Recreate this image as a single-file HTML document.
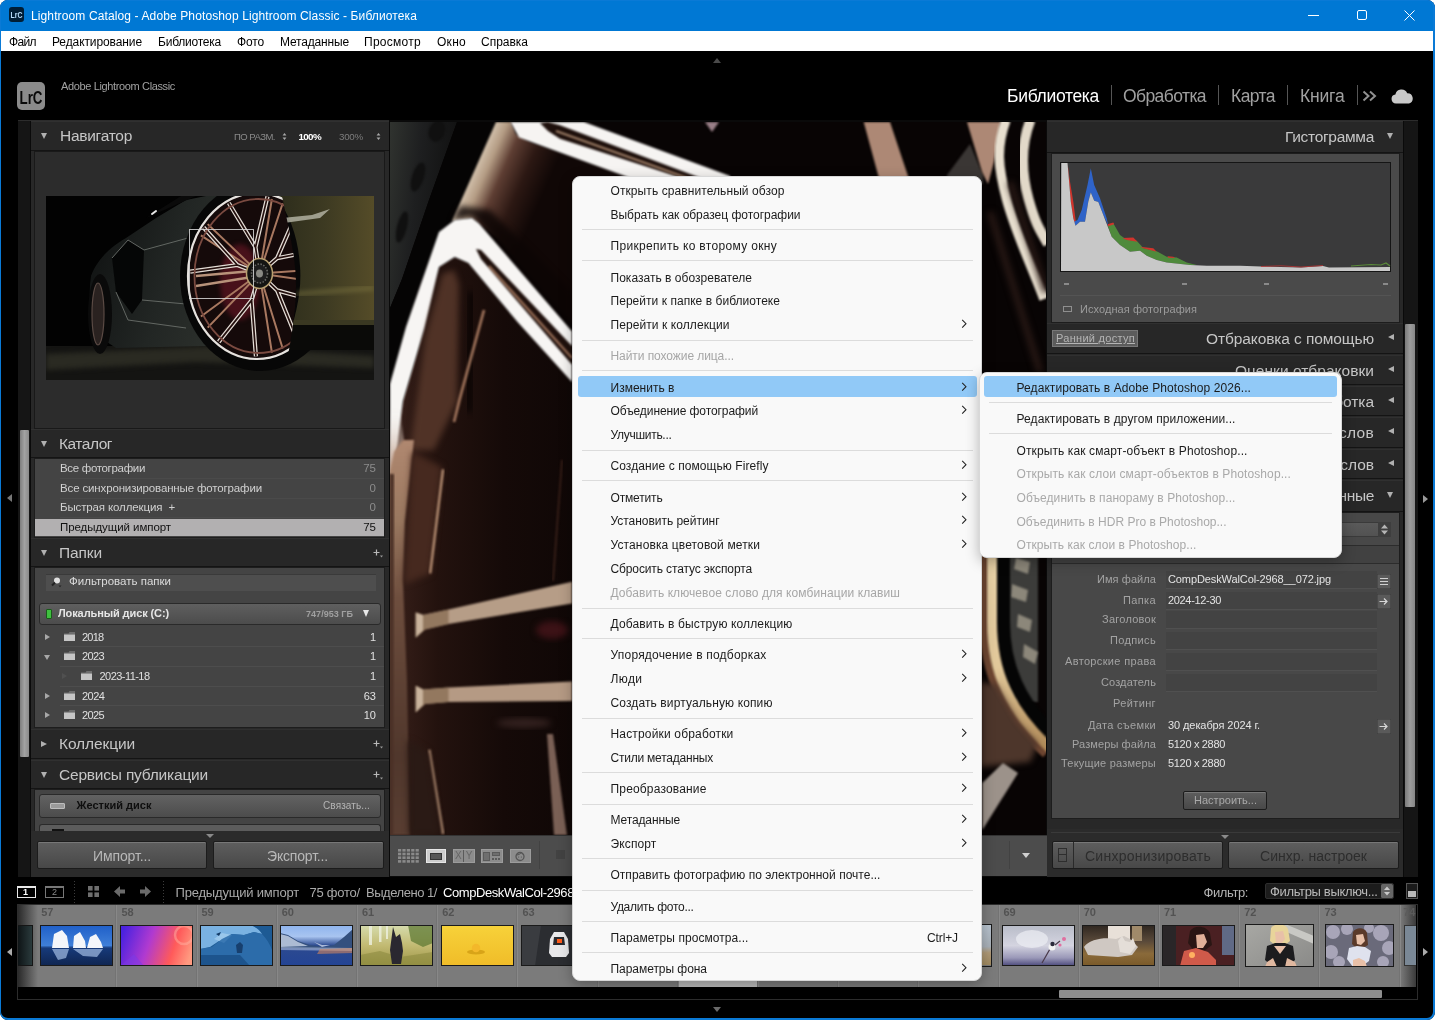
<!DOCTYPE html>
<html lang="ru"><head><meta charset="utf-8"><title>Lightroom Catalog - Adobe Photoshop Lightroom Classic - Библиотека</title>
<style>
html,body{margin:0;padding:0}
body{width:1435px;height:1020px;overflow:hidden;background:#fff;font-family:"Liberation Sans",sans-serif;position:relative}
*{box-sizing:border-box}
.a{position:absolute}
.t{position:absolute;white-space:nowrap;line-height:1;transform-origin:0 50%}
.r{transform-origin:100% 50%}
#win{position:absolute;left:0;top:0;width:1435px;height:1020px;background:#000;border-radius:8px;overflow:hidden;will-change:transform}
#frame{position:absolute;left:0;top:0;width:1435px;height:1020px;border:1px solid #0a7ad6;border-bottom-width:2px;border-right-width:2px;border-radius:8px;z-index:50;pointer-events:none}
#title{left:0;top:0;width:1435px;height:31px;background:#0078d4}
#mbar{left:1px;top:31px;width:1433px;height:20px;background:#fff}
.mi{font-size:12px;color:#000;top:36px}
.ph{font-size:15.5px;color:#c6c6c6}
.tri{width:0;height:0;border-style:solid}

.hd{position:absolute;background:#272727;border-bottom:1px solid #141414;border-top:1px solid #303030}
.row{font-size:11.5px;color:#d0d0d0}
.cnt{font-size:11.5px;color:#8c8c8c}
.sepl{position:absolute;height:1px;background:#4a4a4a;left:60px;width:324px}
.btn{position:absolute;border:1px solid #1c1c1c;border-radius:2px;background:linear-gradient(#5e5e5e,#484848);box-shadow:inset 0 1px 0 #777}

.menu{position:absolute;background:#f9f9f9;border:1px solid #d8d8d8;border-radius:8px;box-shadow:0 4px 14px rgba(0,0,0,.28)}
.m{position:absolute;white-space:nowrap;line-height:1;font-size:12px;color:#1b1b1b;left:610.500px;margin-top:1px}
.m.d{color:#a6a6a6}
.ms{position:absolute;left:582px;width:391px;height:1px;background:#dcdcdc}
.s{position:absolute;white-space:nowrap;line-height:1;font-size:12px;color:#1b1b1b;left:1016.500px;margin-top:1px}
.s.d{color:#a9a9a9}
.ss{position:absolute;left:989px;width:343px;height:1px;background:#dcdcdc}
/*SECTION-CSS*/
</style></head><body>
<div id="win">
<!-- title bar -->
<div class="a" id="title"></div>
<svg class="a" style="left:9px;top:7px" width="15" height="15" viewBox="0 0 15 15"><rect width="15" height="15" rx="3" fill="#001e36"></rect><text x="1.500" y="11" font-family="Liberation Sans,sans-serif" font-size="9" font-weight="bold" fill="#b5dcfa" textLength="12" lengthAdjust="spacingAndGlyphs">LrC</text></svg>
<div class="t" id="ttl" style="left: 31px; top: 10px; font-size: 12px; color: rgb(255, 255, 255); letter-spacing: 0.12px;">Lightroom Catalog - Adobe Photoshop Lightroom Classic - Библиотека</div>
<svg class="a" style="left:1300px;top:8px" width="125" height="16" viewBox="0 0 125 16" fill="none" stroke="#fff" stroke-width="1"><path d="M8 7.5h11"></path><rect x="57.5" y="2.5" width="9" height="9" rx="1.5"></rect><path d="M104.500 2.500l10 10M114.500 2.500l-10 10"></path></svg>
<!-- menu bar -->
<div class="a" id="mbar"></div>
<div class="t mi" style="left: 9px; letter-spacing: -0.629px;">Файл</div>
<div class="t mi" style="left: 52px; letter-spacing: -0.102px;">Редактирование</div>
<div class="t mi" style="left: 158px; letter-spacing: -0.225px;">Библиотека</div>
<div class="t mi" style="left: 237px; letter-spacing: -0.145px;">Фото</div>
<div class="t mi" style="left: 280px; letter-spacing: -0.167px;">Метаданные</div>
<div class="t mi" style="left: 364px; letter-spacing: 0.273px;">Просмотр</div>
<div class="t mi" style="left: 437px; letter-spacing: 0.277px;">Окно</div>
<div class="t mi" style="left: 481px; letter-spacing: -0.011px;">Справка</div>

<!-- top identity bar -->
<div class="tri a" style="left:713px;top:58px;border-width:0 4px 5px 4px;border-color:transparent transparent #4a4a4a transparent"></div>
<div class="tri a" style="left:713px;top:1007px;border-width:5px 4px 0 4px;border-color:#6a6a6a transparent transparent transparent"></div>
<div class="tri a" style="left:7px;top:494px;border-width:4px 5px 4px 0;border-color:transparent #777 transparent transparent"></div>
<div class="tri a" style="left:1423px;top:495px;border-width:4px 0 4px 5px;border-color:transparent transparent transparent #999"></div>
<div class="tri a" style="left:7px;top:948px;border-width:4px 5px 4px 0;border-color:transparent #aaa transparent transparent"></div>
<div class="tri a" style="left:1423px;top:948px;border-width:4px 0 4px 5px;border-color:transparent transparent transparent #aaa"></div>
<svg class="a" style="left:17px;top:82px" width="28" height="28" viewBox="0 0 28 28"><rect width="28" height="28" rx="5" fill="#8b8b8b"></rect><text x="2.500" y="21.500" font-family="Liberation Sans,sans-serif" font-size="19" font-weight="bold" fill="#0a0a0a" textLength="23" lengthAdjust="spacingAndGlyphs">LrC</text></svg>
<div class="t" style="left: 61px; top: 81px; font-size: 11px; color: rgb(162, 162, 162); letter-spacing: -0.361px;">Adobe Lightroom Classic</div>
<div class="t" style="left: 1007px; top: 88px; font-size: 17.5px; color: rgb(255, 255, 255); letter-spacing: -0.316px;">Библиотека</div>
<div class="t" style="left: 1123px; top: 88px; font-size: 17.5px; color: rgb(160, 160, 160); letter-spacing: -0.585px;">Обработка</div>
<div class="t" style="left: 1231px; top: 88px; font-size: 17.5px; color: rgb(160, 160, 160); letter-spacing: -0.566px;">Карта</div>
<div class="t" style="left: 1300px; top: 88px; font-size: 17.5px; color: rgb(160, 160, 160); letter-spacing: -0.175px;">Книга</div>
<div class="a" style="left:1111px;top:85px;width:1px;height:20px;background:#555"></div>
<div class="a" style="left:1218px;top:85px;width:1px;height:20px;background:#555"></div>
<div class="a" style="left:1287px;top:85px;width:1px;height:20px;background:#555"></div>
<div class="a" style="left:1357px;top:85px;width:1px;height:20px;background:#555"></div>
<svg class="a" style="left:1362px;top:90px" width="16" height="12" viewBox="0 0 16 12" fill="none" stroke="#909090" stroke-width="2"><path d="M1.500 1.500l5 4.500l-5 4.500M8 1.500l5 4.500l-5 4.500"></path></svg>
<svg class="a" style="left:1391px;top:89px" width="23" height="15" viewBox="0 0 23 15"><path d="M5 14.500a4.500 4.500 0 0 1-.6-8.950a6.200 6.200 0 0 1 11.800-1.400a5.300 5.300 0 0 1 1.800 10.350z" fill="#c9c9c9"></path></svg>

<!-- left panel -->
<div class="a" style="left:18px;top:120px;width:371px;height:757px;background:#151515;border-top:1px solid #2c2c2c"></div>
<div class="a" style="left:30px;top:121px;width:1px;height:756px;background:#0a0a0a"></div><div class="a" style="left:31px;top:121px;width:358px;height:710px;background:#282828"></div>
<div class="a" style="left:20px;top:430px;width:9px;height:327px;background:linear-gradient(90deg,#7e7e7e,#a2a2a2 50%,#8a8a8a);border-radius:1px"></div>
<div class="hd" style="left:31px;top:121px;width:358px;height:30px"></div>
<div class="tri a" style="left:41px;top:133px;border-width:6px 3.500px 0 3.500px;border-color:#b0b0b0 transparent transparent transparent"></div>
<div class="t ph" style="left: 60px; top: 128px; letter-spacing: -0.274px;">Навигатор</div>
<div class="t" style="left: 234px; top: 132px; font-size: 9.5px; color: rgb(138, 138, 138); letter-spacing: -0.512px;">ПО РАЗМ.</div>
<div class="t" style="left: 298.5px; top: 132px; font-size: 9.8px; color: rgb(255, 255, 255); font-weight: bold; letter-spacing: -0.641px;">100%</div>
<div class="t" style="left: 339px; top: 132px; font-size: 9.8px; color: rgb(124, 124, 124); letter-spacing: -0.266px;">300%</div>
<svg class="a" style="left:282px;top:132px" width="5" height="9" viewBox="0 0 5 9"><path d="M2.500 1l1.900 2.500h-3.800zM2.500 8l1.900-2.500h-3.800z" fill="#a8a8a8"></path></svg>
<svg class="a" style="left:376px;top:132px" width="5" height="9" viewBox="0 0 5 9"><path d="M2.500 1l1.900 2.500h-3.800zM2.500 8l1.900-2.500h-3.800z" fill="#a8a8a8"></path></svg>
<div class="a" style="left:34px;top:151px;width:351px;height:278px;background:#2c2c2c;border:1px solid #191919"></div>
<svg class="a" style="left:46px;top:196px" width="328" height="184" viewBox="0 0 328 184">
<defs>
<filter id="n1" color-interpolation-filters="sRGB" x="-10%" y="-10%" width="120%" height="120%"><feGaussianBlur stdDeviation="0.7"></feGaussianBlur></filter>
<filter id="n3" color-interpolation-filters="sRGB" x="-20%" y="-20%" width="140%" height="140%"><feGaussianBlur stdDeviation="2.500"></feGaussianBlur></filter>
<linearGradient id="ngreen" x1="0" y1="0" x2="1" y2="0"><stop offset="0" stop-color="#2c2c1b"></stop><stop offset="0.5" stop-color="#3d3a22"></stop><stop offset="1" stop-color="#554c28"></stop></linearGradient>
<linearGradient id="nbody" x1="0" y1="0" x2="1" y2="0.300"><stop offset="0" stop-color="#0e1010"></stop><stop offset="0.6" stop-color="#222624"></stop><stop offset="1" stop-color="#2c302c"></stop></linearGradient>
<clipPath id="nclip"><rect width="328" height="184"></rect></clipPath>
<clipPath id="wclip"><path d="M120 -5H235C242 30 250 60 250 90C250 120 244 150 236 190H120z"></path></clipPath>
</defs>
<g clip-path="url(#nclip)">
<rect width="328" height="184" fill="#020202"></rect>
<!-- ground -->
<rect y="150" width="328" height="34" fill="#141412"></rect>
<polygon points="0,158 170,150 328,160 328,172 150,166 0,174" fill="#2a2a22" filter="url(#n3)"></polygon>
<!-- car body left -->
<path d="M45 80C50 66 62 52 80 42L110 22L140 4L160 0H200L160 150L70 152L52 140C44 120 42 100 45 80z" fill="url(#nbody)" filter="url(#n1)"></path>
<path d="M100 22L150 0H135z" fill="#0a0a0a"></path>
<path d="M66 62L82 44L98 54L96 104L86 118L70 96z" fill="#050606" filter="url(#n1)"></path>
<path d="M98 54L142 42M70 96L82 124L140 132M96 104L140 108" stroke="#6a6e6a" stroke-width="0.900" fill="none"></path>
<path d="M66 62L82 44L98 54" stroke="#7a7e7a" stroke-width="0.800" fill="none"></path>
<path d="M106 18l4-3" stroke="#e8e8e8" stroke-width="2" stroke-linecap="round"></path>
<!-- rear wheel small -->
<ellipse cx="54" cy="118" rx="12" ry="40" fill="#0a0a0a"></ellipse>
<ellipse cx="52" cy="118" rx="6" ry="31" fill="#2a2220" stroke="#5a4a44" stroke-width="1.200"></ellipse>
<!-- main tire -->
<ellipse cx="214" cy="80" rx="80" ry="95" fill="#070707"></ellipse>
<!-- green body right -->
<path d="M230 0H328V150H240C250 120 256 95 254 70C252 40 244 20 230 0z" fill="url(#ngreen)" filter="url(#n1)"></path>
<path d="M236 22l30-3l18-6l-10 9l-36 5z" fill="#b8b8a8" opacity="0.800" filter="url(#n1)"></path>
<path d="M250 98L328 92" stroke="#8a8248" stroke-width="3" filter="url(#n3)" opacity="0.700"></path>
<rect x="238" y="128" width="90" height="26" fill="#0a0a08" filter="url(#n1)"></rect>
<rect x="246" y="124" width="82" height="5" fill="#3a3822" filter="url(#n1)"></rect>
<!-- wheel -->
<g clip-path="url(#wclip)">
<ellipse cx="211" cy="80" rx="69" ry="83" fill="#150a0a"></ellipse>
<ellipse cx="194" cy="86" rx="20" ry="38" fill="#5a1420" filter="url(#n3)" opacity="0.750"></ellipse>
<path d="M213.5 77.5L154.9 39.3M213.5 77.5L161.7 28.1M213.5 77.5L225.9 3.0M213.5 77.5L236.7 7.3M213.5 77.5L276.4 73.0M213.5 77.5L276.4 86.7M213.5 77.5L236.7 152.5M213.5 77.5L225.9 156.7M213.5 77.5L161.7 131.6M213.5 77.5L154.9 120.5" stroke="#a87860" stroke-width="2" fill="none" filter="url(#n1)"></path>
<path d="M213.5 77.5L191.3 69.0L144.2 75.7M213.5 77.5L191.3 69.0L157.6 31.5M213.5 77.5L209.5 51.2L182.8 7.0M213.5 77.5L209.5 51.2L221.5 0.4M213.5 77.5L231.1 62.2L251.4 15.6M213.5 77.5L231.1 62.2L274.4 53.7M213.5 77.5L231.1 94.4L274.4 106.1M213.5 77.5L231.1 94.4L251.4 144.2M213.5 77.5L205.6 104.4L209.9 160.4M213.5 77.5L205.6 104.4L172.7 145.9" stroke="#e4ddd6" stroke-width="4.200" fill="none" stroke-linejoin="round" filter="url(#n1)"></path>
<path d="M213.5 77.5L191.3 69.0L144.2 75.7M213.5 77.5L191.3 69.0L157.6 31.5M213.5 77.5L209.5 51.2L182.8 7.0M213.5 77.5L209.5 51.2L221.5 0.4M213.5 77.5L231.1 62.2L251.4 15.6M213.5 77.5L231.1 62.2L274.4 53.7M213.5 77.5L231.1 94.4L274.4 106.1M213.5 77.5L231.1 94.4L251.4 144.2M213.5 77.5L205.6 104.4L209.9 160.4M213.5 77.5L205.6 104.4L172.7 145.9" stroke="#24100e" stroke-width="1.700" fill="none" stroke-linejoin="round"></path>
<path d="M206 75L150 80M206 81L150 90" stroke="#b8927a" stroke-width="2.400" fill="none" filter="url(#n1)"></path>
<ellipse cx="211" cy="80" rx="69" ry="83" fill="none" stroke="#e6e2de" stroke-width="2.200"></ellipse>
<ellipse cx="212.5" cy="80" rx="64" ry="77" fill="none" stroke="#7a4a40" stroke-width="1.800"></ellipse>
<ellipse cx="213.5" cy="77.5" rx="13" ry="15" fill="#141412" stroke="#b8a070" stroke-width="1.500"></ellipse>
<ellipse cx="213.5" cy="77.5" rx="8" ry="9.500" fill="#1e1e1e" stroke="#6a6a66" stroke-width="1.500" stroke-dasharray="1.500 1.500"></ellipse>
<ellipse cx="213.5" cy="77.5" rx="3.500" ry="4" fill="#8a8a84"></ellipse>
</g>
<!-- zoom rect -->
<rect x="143.500" y="33.500" width="64" height="69" fill="none" stroke="#d8d8d8" stroke-width="1" opacity="0.850"></rect>
</g></svg>
<div class="hd" style="left:31px;top:429px;width:358px;height:29px"></div>
<div class="tri a" style="left:41px;top:441px;border-width:6px 3.500px 0 3.500px;border-color:#b0b0b0 transparent transparent transparent"></div>
<div class="t ph" style="left: 59px; top: 436px; letter-spacing: -0.48px;">Каталог</div>
<div class="a" style="left:34px;top:458px;width:351px;height:80px;background:#444;border:1px solid #1d1d1d"></div>
<div class="t row" style="left: 60px; top: 463px; letter-spacing: -0.318px;">Все фотографии</div>
<div class="t cnt r" style="right:1059px;top:463.0px">75</div>
<div class="sepl" style="top:478px"></div>
<div class="t row" style="left: 60px; top: 482.7px; letter-spacing: -0.143px;">Все синхронизированные фотографии</div>
<div class="t cnt r" style="right:1059px;top:482.7px">0</div>
<div class="sepl" style="top:498px"></div>
<div class="t row" style="left: 60px; top: 502.4px; letter-spacing: -0.127px;">Быстрая коллекция&nbsp; +</div>
<div class="t cnt r" style="right:1059px;top:502.4px">0</div>
<div class="sepl" style="top:517px"></div>
<div class="a" style="left:35px;top:519px;width:349px;height:17px;background:#b2b0b1"></div>
<div class="t row" style="left: 60px; top: 522px; color: rgb(17, 17, 17); letter-spacing: -0.065px;">Предыдущий импорт</div>
<div class="t cnt r" style="right:1059px;top:522px;color:#111">75</div>
<div class="hd" style="left:31px;top:538px;width:358px;height:29px"></div>
<div class="tri a" style="left:41px;top:550px;border-width:6px 3.500px 0 3.500px;border-color:#b0b0b0 transparent transparent transparent"></div>
<div class="t ph" style="left: 59px; top: 545px; letter-spacing: -0.119px;">Папки</div>
<svg class="a" style="left:373px;top:549px" width="11" height="9" viewBox="0 0 11 9"><path d="M0.500 3.500h6M3.500 0.500v6" stroke="#b8b8b8" stroke-width="1.200" fill="none"></path><path d="M7 6.500h3l-1.500 2z" fill="#999"></path></svg>
<div class="a" style="left:34px;top:567px;width:351px;height:161px;background:#444;border:1px solid #1d1d1d"></div>
<div class="a" style="left:46px;top:574px;width:330px;height:17px;background:#4e4e4e;border-top:1px solid #3a3a3a"></div>
<svg class="a" style="left:51px;top:576px" width="12" height="12" viewBox="0 0 12 12"><circle cx="6" cy="4.500" r="3" fill="#e0e0e0"></circle><path d="M1 9.500l3-3" stroke="#222" stroke-width="2"></path><path d="M7.500 9.500h3l-1.500 1.800z" fill="#222"></path></svg>
<div class="t row" style="left: 69px; top: 576px; color: rgb(220, 220, 220); letter-spacing: 0.005px;">Фильтровать папки</div>
<div class="a" style="left:39px;top:603px;width:342px;height:22px;border:1px solid #2a2a2a;border-radius:3px;background:linear-gradient(#5f5f5f,#4c4c4c)"></div>
<div class="a" style="left:46px;top:609px;width:6px;height:10px;background:#3fc03f;border:1px solid #1a5a1a;border-radius:1px"></div>
<div class="t row" style="left: 58px; top: 608px; color: rgb(230, 230, 230); font-weight: bold; font-size: 11px; letter-spacing: -0.107px;">Локальный диск (C:)</div>
<div class="t" style="left: 306px; top: 609.5px; font-size: 9px; color: rgb(160, 160, 160); font-weight: bold; letter-spacing: 0.039px;">747/953 ГБ</div>
<div class="tri a" style="left:363px;top:610px;border-width:7px 3.500px 0 3.500px;border-color:#e8e8e8 transparent transparent transparent"></div>
<div class="tri a" style="left:45px;top:633.5px;border-width:3px 0 3px 5px;border-color:transparent transparent transparent #a8a8a8"></div>
<svg class="a" style="left:63.5px;top:631.5px" width="11" height="9" viewBox="0 0 11 9"><path d="M0 1.500h4.500l1-1.500h5.500v9h-11z" fill="#6e6e6e"></path><rect y="2.600" width="11" height="6.400" fill="#c6c6c6"></rect></svg>
<div class="t row" style="left: 82px; top: 631.5px; font-size: 11px; color: rgb(224, 224, 224); letter-spacing: -0.746px;">2018</div>
<div class="t row r" style="right:1059px;top:631.5px;font-size:11px;color:#e0e0e0">1</div>
<div class="sepl" style="top:646px;background:#4d4d4d"></div>
<div class="tri a" style="left:44px;top:654.6px;border-width:5px 3px 0 3px;border-color:#a8a8a8 transparent transparent transparent"></div>
<svg class="a" style="left:63.5px;top:651.1px" width="11" height="9" viewBox="0 0 11 9"><path d="M0 1.500h4.500l1-1.500h5.500v9h-11z" fill="#6e6e6e"></path><rect y="2.600" width="11" height="6.400" fill="#c6c6c6"></rect></svg>
<div class="t row" style="left: 82px; top: 651.1px; font-size: 11px; color: rgb(224, 224, 224); letter-spacing: -0.621px;">2023</div>
<div class="t row r" style="right:1059px;top:651.1px;font-size:11px;color:#e0e0e0">1</div>
<div class="sepl" style="top:666px;background:#4d4d4d"></div>
<div class="tri a" style="left:62px;top:672.8px;border-width:3px 0 3px 5px;border-color:transparent transparent transparent #505050"></div>
<svg class="a" style="left:81.0px;top:670.8px" width="11" height="9" viewBox="0 0 11 9"><path d="M0 1.500h4.500l1-1.500h5.500v9h-11z" fill="#6e6e6e"></path><rect y="2.600" width="11" height="6.400" fill="#c6c6c6"></rect></svg>
<div class="t row" style="left: 99.5px; top: 670.8px; font-size: 11px; color: rgb(224, 224, 224); letter-spacing: -0.545px;">2023-11-18</div>
<div class="t row r" style="right:1059px;top:670.8px;font-size:11px;color:#e0e0e0">1</div>
<div class="sepl" style="top:686px;background:#4d4d4d"></div>
<div class="tri a" style="left:45px;top:692.5px;border-width:3px 0 3px 5px;border-color:transparent transparent transparent #a8a8a8"></div>
<svg class="a" style="left:63.5px;top:690.5px" width="11" height="9" viewBox="0 0 11 9"><path d="M0 1.500h4.500l1-1.500h5.500v9h-11z" fill="#6e6e6e"></path><rect y="2.600" width="11" height="6.400" fill="#c6c6c6"></rect></svg>
<div class="t row" style="left: 82px; top: 690.5px; font-size: 11px; color: rgb(224, 224, 224); letter-spacing: -0.496px;">2024</div>
<div class="t row r" style="right:1059px;top:690.5px;font-size:11px;color:#e0e0e0">63</div>
<div class="sepl" style="top:705px;background:#4d4d4d"></div>
<div class="tri a" style="left:45px;top:712.1px;border-width:3px 0 3px 5px;border-color:transparent transparent transparent #a8a8a8"></div>
<svg class="a" style="left:63.5px;top:710.1px" width="11" height="9" viewBox="0 0 11 9"><path d="M0 1.500h4.500l1-1.500h5.500v9h-11z" fill="#6e6e6e"></path><rect y="2.600" width="11" height="6.400" fill="#c6c6c6"></rect></svg>
<div class="t row" style="left: 82px; top: 710.1px; font-size: 11px; color: rgb(224, 224, 224); letter-spacing: -0.621px;">2025</div>
<div class="t row r" style="right:1059px;top:710.1px;font-size:11px;color:#e0e0e0">10</div>
<div class="hd" style="left:31px;top:729px;width:358px;height:30px"></div>
<div class="tri a" style="left:41px;top:740.5px;border-width:3.5px 0 3.5px 6px;border-color:transparent transparent transparent #b0b0b0"></div>
<div class="t ph" style="left: 59px; top: 736px; letter-spacing: -0.111px;">Коллекции</div>
<svg class="a" style="left:373px;top:740px" width="11" height="9" viewBox="0 0 11 9"><path d="M0.500 3.500h6M3.500 0.500v6" stroke="#b8b8b8" stroke-width="1.200" fill="none"></path><path d="M7 6.500h3l-1.500 2z" fill="#999"></path></svg>
<div class="hd" style="left:31px;top:760px;width:358px;height:29px"></div>
<div class="tri a" style="left:41px;top:772px;border-width:6px 3.500px 0 3.500px;border-color:#b0b0b0 transparent transparent transparent"></div>
<div class="t ph" style="left: 59px; top: 767px; letter-spacing: -0.204px;">Сервисы публикации</div>
<svg class="a" style="left:373px;top:771px" width="11" height="9" viewBox="0 0 11 9"><path d="M0.500 3.500h6M3.500 0.500v6" stroke="#b8b8b8" stroke-width="1.200" fill="none"></path><path d="M7 6.500h3l-1.500 2z" fill="#999"></path></svg>
<div class="a" style="left:34px;top:789px;width:351px;height:42px;background:#444;border:1px solid #1d1d1d;border-bottom:none"></div>
<div class="a" style="left:39px;top:794px;width:342px;height:24px;border:1px solid #2a2a2a;border-radius:3px;background:linear-gradient(#626262,#4c4c4c)"></div>
<div class="a" style="left:39px;top:824px;width:342px;height:7px;border:1px solid #2a2a2a;border-bottom:none;border-radius:3px 3px 0 0;background:#5c5c5c"></div>
<div class="a" style="left:52px;top:829px;width:12px;height:2px;background:#111"></div>
<div class="a" style="left:50px;top:803px;width:15px;height:6px;background:#9a9a9a;border:1px solid #bdbdbd;border-radius:1px"></div>
<div class="t row" style="left: 76.5px; top: 800px; color: rgb(14, 14, 14); font-weight: bold; font-size: 11px; letter-spacing: 0.01px;">Жесткий диск</div>
<div class="t row" style="left: 323px; top: 801px; color: rgb(180, 180, 180); font-size: 10px; letter-spacing: 0.111px;">Связать...</div>
<div class="a" style="left:31px;top:831px;width:358px;height:46px;background:#2b2b2b"></div>
<div class="tri a" style="left:206px;top:834px;border-width:4px 4px 0 4px;border-color:#8a8a8a transparent transparent transparent"></div>
<div class="btn" style="left:37px;top:841px;width:170px;height:28px"></div>
<div class="btn" style="left:213px;top:841px;width:171px;height:28px"></div>
<div class="t" style="left: 93px; top: 849px; font-size: 14px; color: rgb(184, 184, 184); letter-spacing: -0.118px;">Импорт...</div>
<div class="t" style="left: 267px; top: 849px; font-size: 14px; color: rgb(184, 184, 184); letter-spacing: -0.173px;">Экспорт...</div>
<!-- center photo -->
<div class="a" style="left:389px;top:120px;width:658px;height:757px;background:#0a0a0a"></div>
<svg class="a" style="left:390px;top:122px" width="656" height="713" viewBox="0 0 656 713">
<defs>
<filter id="b1" color-interpolation-filters="sRGB" x="-10%" y="-10%" width="120%" height="120%"><feGaussianBlur stdDeviation="0.9"></feGaussianBlur></filter>
<filter id="b3" color-interpolation-filters="sRGB" x="-20%" y="-20%" width="140%" height="140%"><feGaussianBlur stdDeviation="3"></feGaussianBlur></filter>
<filter id="b8" color-interpolation-filters="sRGB" x="-30%" y="-30%" width="160%" height="160%"><feGaussianBlur stdDeviation="8"></feGaussianBlur></filter>
<linearGradient id="gface" gradientUnits="userSpaceOnUse" x1="80" y1="48" x2="150" y2="79"><stop offset="0" stop-color="#dccdb9"></stop><stop offset="0.2" stop-color="#b49c84"></stop><stop offset="0.4" stop-color="#5e3e33"></stop><stop offset="0.68" stop-color="#2c1813"></stop><stop offset="1" stop-color="#100706"></stop></linearGradient>
<linearGradient id="grec" gradientUnits="userSpaceOnUse" x1="0" y1="0" x2="190" y2="0"><stop offset="0" stop-color="#38201a"></stop><stop offset="0.25" stop-color="#23120e"></stop><stop offset="0.6" stop-color="#150a08"></stop><stop offset="1" stop-color="#0f0706"></stop></linearGradient>
<linearGradient id="grim" gradientUnits="userSpaceOnUse" x1="0" y1="318" x2="0" y2="713"><stop offset="0" stop-color="#b08870"></stop><stop offset="0.2" stop-color="#9a7860"></stop><stop offset="0.4" stop-color="#6e4e3e"></stop><stop offset="0.8" stop-color="#50372c"></stop><stop offset="1" stop-color="#593e32"></stop></linearGradient>
<linearGradient id="gtire" x1="0" y1="0" x2="1" y2="0.3"><stop offset="0" stop-color="#30332f"></stop><stop offset="0.45" stop-color="#1e1f20"></stop><stop offset="1" stop-color="#101010"></stop></linearGradient>
<linearGradient id="garc" x1="0" y1="0" x2="0" y2="1"><stop offset="0" stop-color="#e9d3a8"></stop><stop offset="0.6" stop-color="#e2c89a"></stop><stop offset="1" stop-color="#b08a58"></stop></linearGradient>
</defs>
<rect width="656" height="713" fill="#080404"></rect>
<!-- top-left tire -->
<polygon points="0,0 67,0 39,78 12,157 0,186" fill="url(#gtire)"></polygon>
<g fill="#101010" filter="url(#b1)"><ellipse cx="47" cy="9" rx="8" ry="11" transform="rotate(20 47 9)"></ellipse><ellipse cx="28" cy="55" rx="6" ry="15" transform="rotate(18 28 55)"></ellipse><ellipse cx="12" cy="105" rx="5" ry="16" transform="rotate(14 12 105)"></ellipse></g>
<polygon points="67,0 106,0 62,99 30,160 0,260 0,186 12,157 39,78" fill="#050404"></polygon>
<!-- brown lit face -->
<polygon points="106,0 121,0 126,12 140,20 340,88 340,200 182,200 110,118 82,96 62,99" fill="url(#gface)" filter="url(#b1)"></polygon>
<polygon points="82,94 62,99 70,84 100,88 182,170 182,207" fill="#0c0504" filter="url(#b3)" opacity="0.85"></polygon>
<!-- top white band -->
<polygon points="120.500,0 194,0 340,54 340,95 232,53 129,15.500" fill="#f6f4f2" filter="url(#b1)"></polygon>
<polygon points="150,1 158,0 170,3.300 304,53.500 340,67 320,67 284,53.500 170,16.700 158,9" fill="#1d0f0b" filter="url(#b1)"></polygon>
<path d="M166 9L300 57" stroke="#a08068" stroke-width="2.200" filter="url(#b1)"></path>
<polygon points="315,0 329,0 322,10" fill="#9a8088" filter="url(#b1)"></polygon>
<!-- recess inside V -->
<polygon points="32,200 49,145 64.700,135 78.400,141 127.500,200 182,259 190,713 0,713 0,350 13,279 34,208" fill="url(#grec)"></polygon>
<!-- white V -->
<g filter="url(#b1)">
<polygon points="0,262 16,205 49,110 64.700,98 82,96 89,101.500 182,209.400 182,260 127.500,200 78.400,141 64.700,135 49,145 34,208 13,279 6,333 2,352 0,352" fill="#f7f5f3"></polygon>
<polygon points="86,127 91,128 182,224 182,242.700 91,137" fill="#1f100c"></polygon>
<path d="M99 144L182 236" stroke="#9a7058" stroke-width="2.200"></path>
</g>
<linearGradient id="gtr" gradientUnits="userSpaceOnUse" x1="0" y1="285" x2="0" y2="350"><stop offset="0" stop-color="#f7f5f3" stop-opacity="0"></stop><stop offset="1" stop-color="#b08870"></stop></linearGradient><polygon points="0,280 9,280 14,318 5,352 0,352" fill="url(#gtr)" filter="url(#b1)"></polygon>
<!-- highlight streaks in recess -->
<polygon points="52,152 64,148 69,162 67,280 44,328 20,328 35,216" fill="#553629" filter="url(#b3)" opacity="0.9"></polygon>
<path d="M82 170L78 290" stroke="#0b0504" stroke-width="10" filter="url(#b3)" opacity="0.85"></path>
<path d="M94 188L69.400 278L64 300" stroke="#a87a60" stroke-width="2.600" fill="none" filter="url(#b1)"></path>
<!-- rim band lower-left -->
<polygon points="13,318 24,318 15,400 13,460 17,560 20,713 0,713 0,352 4,330" fill="url(#grim)" filter="url(#b1)"></polygon>
<polygon points="0,352 4,352 3,713 0,713" fill="#4a3026" filter="url(#b1)"></polygon>
<polygon points="22,330 52,345 40,452 14,462" fill="#46291f" filter="url(#b3)"></polygon>
<path d="M53 347.400L40.200 451.300" stroke="#c39a7c" stroke-width="2.200" filter="url(#b1)"></path>
<path d="M39.200 627.800L53 712" stroke="#b08c72" stroke-width="2.600" filter="url(#b1)"></path>
<polygon points="18,618 38,630 50,713 19,713" fill="#2a1a15" filter="url(#b3)"></polygon>
<path d="M172 338L163 459" stroke="#3e231b" stroke-width="1.600" filter="url(#b1)"></path>
<ellipse cx="134" cy="601" rx="27" ry="5" fill="#33211f" filter="url(#b3)"></ellipse>
<!-- spokes -->
<g filter="url(#b1)">
<polygon points="25.800,490.500 33,493 58.500,487.600 182,459.700 182,481.500 58.500,502 35,507.600 25.800,515.600" fill="#b69d87"></polygon>
<polygon points="25.800,490.500 33,493 58.500,487.600 58.500,502 35,507.600 25.800,515.600" fill="#93785f"></polygon>
<polygon points="25.800,490.500 33,493 33,508.500 25.800,515.600" fill="#c9b39c"></polygon>
<polygon points="25.800,563.800 33,567.400 58.500,565.600 182,559.500 182,579 58.500,580 35,582 25.800,590.300" fill="#b59a84"></polygon>
<polygon points="25.800,563.800 33,567.400 58.500,565.600 58.500,580 35,582 25.800,590.300" fill="#93785f"></polygon>
<polygon points="25.800,563.800 33,567.400 33,583 25.800,590.300" fill="#c9b39c"></polygon>
</g>
<polygon points="157,612 163,612 177,713 164,713" fill="#7a6055" filter="url(#b1)"></polygon>
<ellipse cx="162" cy="508" rx="16" ry="9" fill="#3c1216" filter="url(#b3)"></ellipse>
<!-- top strip right pieces -->
<polygon points="473.700,0 500,0 520,60 490,60" fill="#ad8875" filter="url(#b1)"></polygon>
<polygon points="557,53 580,22 593,53 593,62 557,62" fill="#3a3634" filter="url(#b1)"></polygon>
<polygon points="577,0 611,0 604,40 598,62 592,50" fill="#ad8875" filter="url(#b1)"></polygon>
<path d="M616 -2C606 25 608 45 616.500 77S640 140 654 177" stroke="#e8dfcf" stroke-width="9.500" fill="none" filter="url(#b1)"></path>
<path d="M640.500 -2C630 25 631 50 638.500 77S650 108 658 122" stroke="#e2d9c9" stroke-width="10" fill="none" filter="url(#b1)"></path>
<path d="M600 90L650 250M620 60L656 170" stroke="#2a1a16" stroke-width="6" filter="url(#b3)"></path>
<!-- bottom-right hub -->
<rect x="618" y="430" width="30" height="150" fill="#3c3c3a" filter="url(#b1)"></rect>
<g fill="#8c877a" filter="url(#b1)"><polygon points="626,436 640,440 638,452 624,447"></polygon><polygon points="622,462 638,468 636,480 621,475"></polygon><polygon points="628,492 642,498 640,510 627,505"></polygon><polygon points="634,522 648,530 645,542 633,535"></polygon></g>
<path d="M613 425V500C613 545 629 580 664 615" stroke="#050505" stroke-width="14" fill="none" filter="url(#b1)"></path><path d="M594 425V500C594 552 612 592 656 632" stroke="#6e4631" stroke-width="9" fill="none" filter="url(#b1)"></path>
<path d="M602 425V500C602 550 619 588 660 626" stroke="url(#garc)" stroke-width="10" fill="none" filter="url(#b1)"></path>
<polygon points="590,560 606,562 628,600 648,622 640,640 590,645" fill="#4d362b" filter="url(#b3)"></polygon>
<polygon points="592.300,661 613,641 628,651 592.300,708" fill="#9c928a" filter="url(#b1)"></polygon>
</svg>
<div class="a" style="left:390px;top:835px;width:657px;height:41px;background:#4c4c4c;border-top:1px solid #333"></div>
<svg class="a" style="left:398px;top:849px" width="21" height="14" viewBox="0 0 21 14" fill="#8a8a8a"><g id="gr"><rect width="3.200" height="2.600"></rect><rect x="4.400" width="3.200" height="2.600"></rect><rect x="8.800" width="3.200" height="2.600"></rect><rect x="13.200" width="3.200" height="2.600"></rect><rect x="17.600" width="3.200" height="2.600"></rect></g><use href="#gr" y="3.700"></use><use href="#gr" y="7.400"></use><use href="#gr" y="11.100"></use></svg>
<div class="a" style="left:425.500px;top:849px;width:20px;height:14px;background:#cdcdcd;border:1px solid #e6e6e6"></div><div class="a" style="left:429.500px;top:852.500px;width:12px;height:7px;background:#555;border:1px solid #333"></div>
<div class="a" style="left:452.500px;top:849px;width:22px;height:14px;background:#8c8c8c;border:1px solid #9c9c9c"></div><div class="t" style="left: 455px; top: 851px; font-size: 10px; color: rgb(102, 102, 102); letter-spacing: 0.688px;">X Y</div><div class="a" style="left:463px;top:850px;width:1px;height:12px;background:#5a5a5a"></div>
<div class="a" style="left:480.500px;top:849px;width:22px;height:14px;background:#8c8c8c;border:1px solid #9c9c9c"></div><div class="a" style="left:483px;top:851.500px;width:7px;height:9px;background:#6e6e6e;border:1px solid #5a5a5a"></div><div class="a" style="left:492px;top:851.500px;width:8px;height:4.500px;background:#6e6e6e;border:1px solid #5a5a5a"></div><div class="a" style="left:492px;top:858px;width:8px;height:2px;background:repeating-linear-gradient(90deg,#5a5a5a 0 2px,transparent 2px 3px)"></div>
<div class="a" style="left:509.500px;top:849px;width:21px;height:14px;background:#8c8c8c;border:1px solid #9c9c9c"></div><svg class="a" style="left:515px;top:850.500px" width="10" height="11" viewBox="0 0 10 11"><circle cx="5" cy="5.500" r="4" fill="none" stroke="#555" stroke-width="1.300"></circle><path d="M1.500 4c2 0 4-1 5-2.500l2 2.500" stroke="#555" fill="none"></path><circle cx="3.600" cy="6" r=".6" fill="#555"></circle><circle cx="6.400" cy="6" r=".6" fill="#555"></circle></svg>
<div class="a" style="left:539px;top:841px;width:1px;height:28px;background:#424242"></div>
<div class="a" style="left:556px;top:850px;width:9px;height:9px;background:#424242"></div>
<div class="a" style="left:1009px;top:841px;width:1px;height:28px;background:#424242"></div>
<div class="tri a" style="left:1022px;top:853px;border-width:5px 4.500px 0 4.500px;border-color:#d0d0d0 transparent transparent transparent"></div>
<!-- right panel -->
<div class="a" style="left:1047px;top:120px;width:371px;height:757px;background:#151515;border-top:1px solid #2c2c2c"></div>
<div class="a" style="left:1403px;top:121px;width:1px;height:756px;background:#0a0a0a"></div><div class="a" style="left:1047px;top:121px;width:356px;height:710px;background:#282828"></div>
<div class="a" style="left:1405px;top:324px;width:10px;height:483px;background:linear-gradient(90deg,#7a7a7a,#9c9c9c 50%,#868686);border-radius:1px"></div>
<div class="hd" style="left:1047px;top:121px;width:356px;height:32px"></div><div class="t ph r" style="right: 61px; top: 129px; letter-spacing: -0.301px;">Гистограмма</div><div class="tri a" style="left:1387px;top:133px;border-width:6px 3.500px 0 3.500px;border-color:#b0b0b0 transparent transparent transparent"></div>
<div class="a" style="left:1051px;top:153px;width:349px;height:170px;background:#4a4a4a;border:1px solid #1d1d1d"></div>
<svg class="a" style="left:1060px;top:162px" width="331" height="110" viewBox="-1 -1 331 110"><rect x="-0.500" y="-0.500" width="330" height="109" fill="#3a3a3b" stroke="#151515"></rect>
<polygon points="6.5,0.0 9.8,38.7 12.3,55.3 14.5,62.8 14.8,58.7 12.3,38.7 9.0,18.7" fill="#d0342c"></polygon><polygon points="13.2,58.7 14.5,62.8 19.0,58.7 24.0,58.7 27.3,38.7 29.8,29.5 33.2,37.8 37.3,39.0 42.3,52.0 47.3,62.8 45.7,55.3 39.0,35.3 33.2,22.0 29.8,5.3 26.5,22.0 20.7,47.0 16.5,57.0" fill="#2f63c8"></polygon><polygon points="46.5,62.0 52.3,60.3 59.0,72.0 65.7,76.7 75.7,77.8 82.3,85.0 95.7,88.3 105.7,93.7 115.7,94.5 125.7,99.5 135.7,102.0 129.0,102.0 105.7,99.5 95.7,97.0 85.7,92.8 79.0,87.8 69.0,88.7 59.0,82.0 50.7,73.7" fill="#4f8a3c"></polygon>
<polygon points="46.5,61.2 52.3,59.5 53.2,61.2 47.3,63.3" fill="#d0342c"></polygon><polygon points="61.5,75.0 72.3,74.5 76.5,78.7 65.7,77.0" fill="#d0342c"></polygon><polygon points="79.0,83.7 92.3,85.3 95.7,88.7 82.3,85.3" fill="#d0342c"></polygon><polygon points="106.5,93.3 112.3,93.7 114.0,95.0 107.3,94.7" fill="#d0342c"></polygon>
<polygon points="0.3,0.0 6.5,0.0 9.8,38.7 12.3,55.3 14.5,62.8 19.0,58.7 24.0,58.7 27.3,38.7 29.8,29.5 33.2,37.8 37.3,39.0 42.3,52.0 50.7,73.7 59.0,82.0 69.0,88.7 79.0,87.8 85.7,92.8 95.7,97.0 105.7,99.5 129.0,102.0 145.7,102.8 179.0,102.8 200,103.5 240,104.5 262,103 268,104.5 329,104 329,108 0,108" fill="#c8c8c8"></polygon>
<path d="M200 103.500l20-.7l20 1.200l22-1.500" stroke="#b33" stroke-width="0.800" fill="none"></path><path d="M290 103l20-1.500l10 .5l5-2l4 3" stroke="#5a8a3a" stroke-width="1.200" fill="none"></path></svg>
<div class="a" style="left:1064px;top:283px;width:5px;height:2px;background:#8a8a8a"></div>
<div class="a" style="left:1182px;top:283px;width:5px;height:2px;background:#8a8a8a"></div>
<div class="a" style="left:1264px;top:283px;width:5px;height:2px;background:#8a8a8a"></div>
<div class="a" style="left:1383px;top:283px;width:5px;height:2px;background:#8a8a8a"></div>
<div class="a" style="left:1060px;top:295px;width:331px;height:1px;background:#545454"></div>
<div class="a" style="left:1063px;top:306px;width:9px;height:6px;border:1px solid #8f8f8f"></div>
<div class="t" style="left: 1080px; top: 304px; font-size: 11px; color: rgb(156, 156, 156); letter-spacing: 0.072px;">Исходная фотография</div>
<div class="hd" style="left:1047px;top:323px;width:356px;height:31px"></div><div class="t ph r" style="right: 61px; top: 331px; letter-spacing: -0.097px;">Отбраковка с помощью</div><div class="tri a" style="left:1388px;top:334px;border-width:3.500px 6px 3.500px 0;border-color:transparent #b0b0b0 transparent transparent"></div>
<div class="a" style="left:1052px;top:330px;width:86px;height:17px;background:#5c5c5c;border:1px solid #777"></div>
<div class="t" style="left: 1056px; top: 333px; font-size: 11px; color: rgb(180, 180, 180); text-decoration: underline; letter-spacing: 0.288px;">Ранний доступ</div>
<div class="hd" style="left:1047px;top:355px;width:356px;height:30px"></div><div class="t ph r" style="right: 61px; top: 363px; letter-spacing: 0.033px;">Оценки отбраковки</div><div class="tri a" style="left:1388px;top:366px;border-width:3.500px 6px 3.500px 0;border-color:transparent #b0b0b0 transparent transparent"></div>
<div class="hd" style="left:1047px;top:386px;width:356px;height:30px"></div><div class="t ph r" style="right: 61px; top: 394px; letter-spacing: -0.05px;">Быстрая обработка</div><div class="tri a" style="left:1388px;top:397px;border-width:3.500px 6px 3.500px 0;border-color:transparent #b0b0b0 transparent transparent"></div>
<div class="hd" style="left:1047px;top:417px;width:356px;height:31px"></div><div class="t ph r" style="right: 61px; top: 425px; letter-spacing: 0.29px;">Набор ключевых слов</div><div class="tri a" style="left:1388px;top:428px;border-width:3.500px 6px 3.500px 0;border-color:transparent #b0b0b0 transparent transparent"></div>
<div class="hd" style="left:1047px;top:449px;width:356px;height:30px"></div><div class="t ph r" style="right: 61px; top: 457px; letter-spacing: -0.006px;">Список ключевых слов</div><div class="tri a" style="left:1388px;top:460px;border-width:3.500px 6px 3.500px 0;border-color:transparent #b0b0b0 transparent transparent"></div>
<div class="hd" style="left:1047px;top:480px;width:356px;height:32px"></div><div class="t ph r" style="right: 61px; top: 488px; letter-spacing: -0.33px;">Метаданные</div><div class="tri a" style="left:1387px;top:492px;border-width:6px 3.500px 0 3.500px;border-color:#b0b0b0 transparent transparent transparent"></div>
<div class="a" style="left:1051px;top:512px;width:349px;height:307px;background:#484848;border:1px solid #1d1d1d"></div>
<div class="a" style="left:1200px;top:522px;width:191px;height:15px;background:linear-gradient(#5a5a5a,#525252);border:1px solid #3a3a3a;border-radius:2px"></div>
<svg class="a" style="left:1378px;top:522px" width="13" height="15" viewBox="0 0 13 15"><rect width="13" height="15" fill="#3e3e3e"></rect><path d="M6.500 2.500l3.500 4h-7zM6.500 12.500l3.500-4h-7z" fill="#b5b5b5"></path></svg>
<div class="a" style="left:1052px;top:545px;width:347px;height:1px;background:#2c2c2c"></div>
<div class="a" style="left:1052px;top:546px;width:347px;height:17px;background:#414141"></div>
<div class="a" style="left:1052px;top:563px;width:347px;height:1px;background:#2c2c2c"></div>
<div class="t r" style="right: 279px; top: 574px; font-size: 11px; color: rgb(163, 163, 163); letter-spacing: 0.073px;">Имя файла</div>
<div class="t r" style="right: 279px; top: 595px; font-size: 11px; color: rgb(163, 163, 163); letter-spacing: 0.369px;">Папка</div>
<div class="t r" style="right: 279px; top: 614px; font-size: 11px; color: rgb(163, 163, 163); letter-spacing: 0.253px;">Заголовок</div>
<div class="t r" style="right: 279px; top: 635px; font-size: 11px; color: rgb(163, 163, 163); letter-spacing: 0.35px;">Подпись</div>
<div class="t r" style="right: 279px; top: 656px; font-size: 11px; color: rgb(163, 163, 163); letter-spacing: 0.35px;">Авторские права</div>
<div class="t r" style="right: 279px; top: 677px; font-size: 11px; color: rgb(163, 163, 163); letter-spacing: 0.127px;">Создатель</div>
<div class="t r" style="right: 279px; top: 698px; font-size: 11px; color: rgb(163, 163, 163); letter-spacing: 0.373px;">Рейтинг</div>
<div class="t r" style="right: 279px; top: 720px; font-size: 11px; color: rgb(163, 163, 163); letter-spacing: 0.324px;">Дата съемки</div>
<div class="t r" style="right: 279px; top: 739px; font-size: 11px; color: rgb(163, 163, 163); letter-spacing: 0.106px;">Размеры файла</div>
<div class="t r" style="right: 279px; top: 758px; font-size: 11px; color: rgb(163, 163, 163); letter-spacing: 0.207px;">Текущие размеры</div>
<div class="a" style="left:1166px;top:571px;width:211px;height:18px;background:#434343;border-bottom:1px solid #505050"></div>
<div class="a" style="left:1166px;top:592px;width:211px;height:18px;background:#434343;border-bottom:1px solid #505050"></div>
<div class="a" style="left:1166px;top:611px;width:211px;height:18px;background:#434343;border-bottom:1px solid #505050"></div>
<div class="a" style="left:1166px;top:632px;width:211px;height:18px;background:#434343;border-bottom:1px solid #505050"></div>
<div class="a" style="left:1166px;top:653px;width:211px;height:18px;background:#434343;border-bottom:1px solid #505050"></div>
<div class="a" style="left:1166px;top:674px;width:211px;height:18px;background:#434343;border-bottom:1px solid #505050"></div>
<div class="t" style="left: 1168px; top: 574px; font-size: 11px; color: rgb(228, 228, 228); letter-spacing: -0.104px;">CompDeskWalCol-2968__072.jpg</div>
<div class="t" style="left: 1168px; top: 595px; font-size: 11px; color: rgb(228, 228, 228); letter-spacing: -0.328px;">2024-12-30</div>
<div class="t" style="left: 1168px; top: 720px; font-size: 11px; color: rgb(228, 228, 228); letter-spacing: -0.087px;">30 декабря 2024 г.</div>
<div class="t" style="left: 1168px; top: 739px; font-size: 11px; color: rgb(228, 228, 228); letter-spacing: -0.324px;">5120 x 2880</div>
<div class="t" style="left: 1168px; top: 758px; font-size: 11px; color: rgb(228, 228, 228); letter-spacing: -0.324px;">5120 x 2880</div>
<svg class="a" style="left:1377px;top:574px" width="14" height="15" viewBox="0 0 14 15"><rect width="14" height="15" fill="#5a5a5a" stroke="#3a3a3a"></rect><path d="M3 4.500h8M3 7.500h8M3 10.500h8" stroke="#d0d0d0" stroke-width="1"></path></svg>
<svg class="a" style="left:1377px;top:594px" width="14" height="15" viewBox="0 0 14 15"><rect width="14" height="15" fill="#5a5a5a" stroke="#3a3a3a"></rect><path d="M2.500 7.500h7M7 4.500l3 3l-3 3" stroke="#d8d8d8" stroke-width="1.200" fill="none"></path></svg>
<svg class="a" style="left:1377px;top:719px" width="14" height="15" viewBox="0 0 14 15"><rect width="14" height="15" fill="#5a5a5a" stroke="#3a3a3a"></rect><path d="M2.500 7.500h7M7 4.500l3 3l-3 3" stroke="#d8d8d8" stroke-width="1.200" fill="none"></path></svg>
<div class="btn" style="left:1183px;top:791px;width:84px;height:19px"></div>
<div class="t" style="left: 1194px; top: 795px; font-size: 11px; color: rgb(169, 169, 169); letter-spacing: 0.007px;">Настроить...</div>
<div class="a" style="left:1047px;top:829px;width:356px;height:48px;background:#2b2b2b"></div>
<div class="a" style="left:1051px;top:832px;width:349px;height:1px;background:#3a3a3a"></div>
<div class="tri a" style="left:1221px;top:835px;border-width:4px 4px 0 4px;border-color:#8a8a8a transparent transparent transparent"></div>
<div class="btn" style="left:1052px;top:841px;width:171px;height:28px"></div>
<div class="a" style="left:1073px;top:842px;width:1px;height:26px;background:#2a2a2a"></div>
<div class="a" style="left:1058px;top:848px;width:9px;height:14px;border:1px solid #2e2e2e"></div><div class="a" style="left:1058px;top:854px;width:9px;height:1px;background:#2e2e2e"></div>
<div class="btn" style="left:1228px;top:841px;width:171px;height:28px"></div>
<div class="t" style="left: 1085px; top: 849px; font-size: 14px; color: rgb(45, 45, 45); letter-spacing: 0.246px;">Синхронизировать</div>
<div class="t" style="left: 1260px; top: 849px; font-size: 14px; color: rgb(45, 45, 45); letter-spacing: 0.024px;">Синхр. настроек</div>
<!-- filmstrip -->
<div class="a" style="left:17px;top:885.500px;width:19px;height:12px;border:1px solid #e8e8e8;border-top-width:2px"></div><div class="t" style="left:23px;top:888px;font-size:9px;color:#fff;font-weight:bold">1</div>
<div class="a" style="left:45px;top:885.500px;width:19px;height:12px;border:1px solid #777;border-top-width:2px"></div><div class="t" style="left:52px;top:888px;font-size:9px;color:#888">2</div>
<div class="a" style="left:74px;top:881px;width:1px;height:22px;background:repeating-linear-gradient(#3c3c3c 0 1px,transparent 1px 3px)"></div>
<div class="a" style="left:163px;top:881px;width:1px;height:22px;background:repeating-linear-gradient(#3c3c3c 0 1px,transparent 1px 3px)"></div>
<svg class="a" style="left:88px;top:886px" width="11" height="11" viewBox="0 0 11 11" fill="#6e6e6e"><rect width="4.600" height="4.600"></rect><rect x="6.400" width="4.600" height="4.600"></rect><rect y="6.400" width="4.600" height="4.600"></rect><rect x="6.400" y="6.400" width="4.600" height="4.600"></rect></svg>
<svg class="a" style="left:114px;top:886px" width="11" height="11" viewBox="0 0 11 11" fill="#6a6a6a"><path d="M0 5.500L6 0v3.500h5v4H6V11z"></path></svg>
<svg class="a" style="left:139.500px;top:886px" width="11" height="11" viewBox="0 0 11 11" fill="#6a6a6a"><path d="M11 5.500L5 0v3.500H0v4h5V11z"></path></svg>
<div class="t" style="left: 175.5px; top: 886px; font-size: 13px; color: rgb(169, 169, 169); letter-spacing: -0.19px;">Предыдущий импорт</div>
<div class="t" style="left: 309.5px; top: 886px; font-size: 13px; color: rgb(169, 169, 169); letter-spacing: -0.234px;">75 фото/</div>
<div class="t" style="left: 366px; top: 886px; font-size: 13px; color: rgb(169, 169, 169); letter-spacing: -0.462px;">Выделено 1/</div>
<div class="t" style="left: 443px; top: 886px; font-size: 13px; color: rgb(255, 255, 255); letter-spacing: -0.419px;">CompDeskWalCol-2968</div>
<div class="t" style="left: 1203.5px; top: 886px; font-size: 13px; color: rgb(180, 180, 180); letter-spacing: -0.4px;">Фильтр:</div>
<div class="a" style="left:1265px;top:883px;width:129px;height:16px;background:#1c1c1c;border:1px solid #2e2e2e;border-radius:2px"></div>
<div class="t" style="left: 1270px; top: 885px; font-size: 13px; color: rgb(185, 185, 185); letter-spacing: -0.346px;">Фильтры выключ...</div>
<svg class="a" style="left:1381px;top:884px" width="12" height="14" viewBox="0 0 12 14"><rect width="12" height="14" rx="1.500" fill="#666"></rect><path d="M6 2.500l3 3.500h-6zM6 11.500l3-3.500h-6z" fill="#c8c8c8"></path></svg>
<div class="a" style="left:1406px;top:883px;width:12px;height:16px;border:1px solid #555;background:#1a1a1a"></div><div class="a" style="left:1408px;top:891px;width:8px;height:6px;background:#b8b8b8"></div>
<div class="a" style="left:17px;top:904px;width:1401px;height:96px;border:1px solid #2c2c2c"></div>
<div class="a" style="left:18px;top:905px;width:1398px;height:81.500px;background:#7b7b7b"></div>
<div class="a" style="left:678px;top:905px;width:80px;height:81.500px;background:#b9b9b9"></div>
<div class="a" style="left:18px;top:905px;width:20px;height:81.500px;background:linear-gradient(90deg,#2a2a2a,#7b7b7b)"></div>
<div class="a" style="left:1400px;top:905px;width:16px;height:81.500px;background:linear-gradient(90deg,#7b7b7b,#3a3a3a)"></div>
<div class="a" style="left:115.4px;top:905px;width:1px;height:81.500px;background:#737373;box-shadow:1px 0 0 #888"></div>
<div class="a" style="left:195.6px;top:905px;width:1px;height:81.500px;background:#737373;box-shadow:1px 0 0 #888"></div>
<div class="a" style="left:275.8px;top:905px;width:1px;height:81.500px;background:#737373;box-shadow:1px 0 0 #888"></div>
<div class="a" style="left:356.0px;top:905px;width:1px;height:81.500px;background:#737373;box-shadow:1px 0 0 #888"></div>
<div class="a" style="left:436.2px;top:905px;width:1px;height:81.500px;background:#737373;box-shadow:1px 0 0 #888"></div>
<div class="a" style="left:516.4px;top:905px;width:1px;height:81.500px;background:#737373;box-shadow:1px 0 0 #888"></div>
<div class="a" style="left:596.6px;top:905px;width:1px;height:81.500px;background:#737373;box-shadow:1px 0 0 #888"></div>
<div class="a" style="left:676.8px;top:905px;width:1px;height:81.500px;background:#737373;box-shadow:1px 0 0 #888"></div>
<div class="a" style="left:757.0px;top:905px;width:1px;height:81.500px;background:#737373;box-shadow:1px 0 0 #888"></div>
<div class="a" style="left:837.2px;top:905px;width:1px;height:81.500px;background:#737373;box-shadow:1px 0 0 #888"></div>
<div class="a" style="left:917.4px;top:905px;width:1px;height:81.500px;background:#737373;box-shadow:1px 0 0 #888"></div>
<div class="a" style="left:997.6px;top:905px;width:1px;height:81.500px;background:#737373;box-shadow:1px 0 0 #888"></div>
<div class="a" style="left:1077.8px;top:905px;width:1px;height:81.500px;background:#737373;box-shadow:1px 0 0 #888"></div>
<div class="a" style="left:1158.0px;top:905px;width:1px;height:81.500px;background:#737373;box-shadow:1px 0 0 #888"></div>
<div class="a" style="left:1238.2px;top:905px;width:1px;height:81.500px;background:#737373;box-shadow:1px 0 0 #888"></div>
<div class="a" style="left:1318.4px;top:905px;width:1px;height:81.500px;background:#737373;box-shadow:1px 0 0 #888"></div>
<div class="a" style="left:1398.6px;top:905px;width:1px;height:81.500px;background:#737373;box-shadow:1px 0 0 #888"></div>
<div class="t" style="left: 41.2px; top: 907px; font-size: 11px; font-weight: bold; color: rgb(82, 82, 82); letter-spacing: -0.125px;">57</div>
<div class="t" style="left: 121.4px; top: 907px; font-size: 11px; font-weight: bold; color: rgb(82, 82, 82); letter-spacing: -0.125px;">58</div>
<div class="t" style="left: 201.6px; top: 907px; font-size: 11px; font-weight: bold; color: rgb(82, 82, 82); letter-spacing: -0.125px;">59</div>
<div class="t" style="left: 281.8px; top: 907px; font-size: 11px; font-weight: bold; color: rgb(82, 82, 82); letter-spacing: -0.125px;">60</div>
<div class="t" style="left: 362px; top: 907px; font-size: 11px; font-weight: bold; color: rgb(82, 82, 82); letter-spacing: -0.125px;">61</div>
<div class="t" style="left: 442.2px; top: 907px; font-size: 11px; font-weight: bold; color: rgb(82, 82, 82); letter-spacing: -0.125px;">62</div>
<div class="t" style="left: 522.4px; top: 907px; font-size: 11px; font-weight: bold; color: rgb(82, 82, 82); letter-spacing: -0.125px;">63</div>
<div class="t" style="left: 602.6px; top: 907px; font-size: 11px; font-weight: bold; color: rgb(82, 82, 82); letter-spacing: -0.125px;">64</div>
<div class="t" style="left: 682.8px; top: 907px; font-size: 11px; font-weight: bold; color: rgb(82, 82, 82); letter-spacing: -0.125px;">65</div>
<div class="t" style="left: 763px; top: 907px; font-size: 11px; font-weight: bold; color: rgb(82, 82, 82); letter-spacing: -0.125px;">66</div>
<div class="t" style="left: 843.2px; top: 907px; font-size: 11px; font-weight: bold; color: rgb(82, 82, 82); letter-spacing: -0.125px;">67</div>
<div class="t" style="left: 923.4px; top: 907px; font-size: 11px; font-weight: bold; color: rgb(82, 82, 82); letter-spacing: -0.125px;">68</div>
<div class="t" style="left: 1003.6px; top: 907px; font-size: 11px; font-weight: bold; color: rgb(82, 82, 82); letter-spacing: -0.125px;">69</div>
<div class="t" style="left: 1083.8px; top: 907px; font-size: 11px; font-weight: bold; color: rgb(82, 82, 82); letter-spacing: -0.125px;">70</div>
<div class="t" style="left: 1164px; top: 907px; font-size: 11px; font-weight: bold; color: rgb(82, 82, 82); letter-spacing: -0.125px;">71</div>
<div class="t" style="left: 1244.2px; top: 907px; font-size: 11px; font-weight: bold; color: rgb(82, 82, 82); letter-spacing: -0.125px;">72</div>
<div class="t" style="left: 1324.4px; top: 907px; font-size: 11px; font-weight: bold; color: rgb(82, 82, 82); letter-spacing: -0.125px;">73</div>
<div class="a" style="left:1403.2px;top:907px;width:14px;height:12px;overflow:hidden"><div class="t" style="left:0;top:0;font-size:11px;font-weight:bold;color:#5b5b5b">74</div></div>
<svg class="a" style="left:39.6px;top:925px" width="73" height="41" viewBox="0 0 73 41"><defs><linearGradient id="t57" x1="0" y1="0" x2="0" y2="1"><stop offset="0" stop-color="#1f5fc8"></stop><stop offset="0.5" stop-color="#3f7fd8"></stop><stop offset="0.56" stop-color="#173a7a"></stop><stop offset="1" stop-color="#0f2550"></stop></linearGradient></defs><rect width="73" height="41" fill="url(#t57)"></rect><path d="M12 23l2-14l8-4l5 6l2 12zM33 23l1-12l6-4l5 9l1 7zM47 23l3-11l6-3l5 8l2 6z" fill="#f4f6fa"></path><path d="M12 24h17l-3 9l-8 2zM33 24h30l-6 8l-14-1z" fill="#9ab4dc" opacity="0.75"></path><rect x="0.500" y="0.500" width="72" height="40" fill="none" stroke="#1a1a1a"></rect></svg>
<svg class="a" style="left:119.8px;top:925px" width="73" height="41" viewBox="0 0 73 41"><defs><linearGradient id="t58" x1="0" y1="0.350" x2="1" y2="0.550"><stop offset="0" stop-color="#4a22e0"></stop><stop offset="0.4" stop-color="#b03ad0"></stop><stop offset="0.75" stop-color="#ff5a5a"></stop><stop offset="1" stop-color="#ff9a80"></stop></linearGradient></defs><rect width="73" height="41" fill="url(#t58)"></rect><circle cx="64" cy="10" r="9" fill="none" stroke="#ffb0a0" stroke-width="2.500" opacity="0.5"></circle><path d="M0 41l14-12l10 12" fill="#7a3ae8" opacity="0.5"></path><rect x="0.500" y="0.500" width="72" height="40" fill="none" stroke="#1a1a1a"></rect></svg>
<svg class="a" style="left:200.0px;top:925px" width="73" height="41" viewBox="0 0 73 41"><rect width="73" height="41" fill="#1d5a94"></rect><path d="M0 0h50c6 2 10 5 12 9l-8-2l-10 3l-12-1l-10 5l-12 8l-10 2z" fill="#7ab2e2"></path><path d="M14 14l8-6l10 2l-8 8z" fill="#a8d0f0" opacity="0.7"></path><path d="M0 24l12-2l10-8l10-5l12 1l10-3l8 2c4 4 8 10 11 18v14h-73z" fill="#2f70ae" opacity="0.85"></path><path d="M0 30h40l10 11h-50z" fill="#1a4f86" opacity="0.8"></path><path d="M36 20l4-3l3 3l-1 8h-5z" fill="#173f6e"></path><path d="M16 9l5-2l-2 4z" fill="#123a66"></path><rect x="0.500" y="0.500" width="72" height="40" fill="none" stroke="#1a1a1a"></rect></svg>
<svg class="a" style="left:280.2px;top:925px" width="73" height="41" viewBox="0 0 73 41"><defs><linearGradient id="t60" x1="0" y1="0" x2="0" y2="1"><stop offset="0" stop-color="#8eb4ee"></stop><stop offset="0.28" stop-color="#a8c4f0"></stop><stop offset="0.5" stop-color="#2c4a90"></stop><stop offset="1" stop-color="#244494"></stop></linearGradient></defs><rect width="73" height="41" fill="url(#t60)"></rect><path d="M0 8l8 2l10 6l12 4l14 2l10-2l10-8l9-8v20l-73-1z" fill="#34507e"></path><path d="M0 9l8 2l10 6l10 4l-28 1zM34 17l8 3l8 0l-8 2z" fill="#d4dff0" opacity="0.75"></path><path d="M0 22l73 1v3l-73-1z" fill="#c8d4ea" opacity="0.5"></path><path d="M40 24l33-1v5l-36 1z" fill="#e08a5a" opacity="0.55"></path><rect x="0.500" y="0.500" width="72" height="40" fill="none" stroke="#1a1a1a"></rect></svg>
<svg class="a" style="left:360.4px;top:925px" width="73" height="41" viewBox="0 0 73 41"><defs><linearGradient id="t61" x1="0" y1="0" x2="0" y2="1"><stop offset="0" stop-color="#d6dcae"></stop><stop offset="0.5" stop-color="#c2ba72"></stop><stop offset="1" stop-color="#9c9446"></stop></linearGradient></defs><rect width="73" height="41" fill="url(#t61)"></rect><path d="M9 0h3v20h-3zM19 0h2.500v17h-2.500zM26 0h2v14h-2z" fill="#eef0e0" opacity="0.8"></path><path d="M48 0h25v18l-10 4l-12-6z" fill="#5f7a34" opacity="0.75"></path><path d="M0 30l20-4l20 6l33-5v14h-73z" fill="#8c8a40" opacity="0.6"></path><path d="M33 2l3 10l4-3l2 9l1 8l-2 13h-9l-2-14z" fill="#2a2830"></path><rect x="0.500" y="0.500" width="72" height="40" fill="none" stroke="#1a1a1a"></rect></svg>
<svg class="a" style="left:440.6px;top:925px" width="73" height="41" viewBox="0 0 73 41"><defs><linearGradient id="t62" x1="0" y1="0" x2="0" y2="1"><stop offset="0" stop-color="#f7d23a"></stop><stop offset="1" stop-color="#f0bc28"></stop></linearGradient></defs><rect width="73" height="41" fill="url(#t62)"></rect><ellipse cx="35" cy="27" rx="9" ry="2.500" fill="#d8a418"></ellipse><circle cx="35" cy="23" r="4.200" fill="#f3b82a"></circle><rect x="0.500" y="0.500" width="72" height="40" fill="none" stroke="#1a1a1a"></rect></svg>
<svg class="a" style="left:520.8px;top:925px" width="73" height="41" viewBox="0 0 73 41"><rect width="73" height="41" fill="#2b2d31"></rect><path d="M0 0h20l-6 41h-14z" fill="#3a3c40"></path><path d="M29 14l4-7h10l4 7l1 14l-3 4h-14l-3-4z" fill="#e8e8ea"></path><path d="M33 12h10l1 8h-12z" fill="#2a2a2e"></path><rect x="36" y="14" width="5" height="4" fill="#ff5a1a"></rect><rect x="0.500" y="0.500" width="72" height="40" fill="none" stroke="#1a1a1a"></rect></svg>
<svg class="a" style="left:921.8px;top:924px" width="70" height="43" viewBox="0 0 70 43"><defs><linearGradient id="t68" x1="0" y1="0" x2="0" y2="1"><stop offset="0" stop-color="#b8c4d0"></stop><stop offset="0.55" stop-color="#a8b0b8"></stop><stop offset="0.7" stop-color="#b09a78"></stop><stop offset="1" stop-color="#a08a60"></stop></linearGradient></defs><rect width="73" height="41" fill="url(#t68)"></rect><rect x="0.500" y="0.500" width="69" height="42" fill="none" stroke="#1a1a1a"></rect></svg>
<svg class="a" style="left:1002.0px;top:925px" width="73" height="41" viewBox="0 0 73 41"><defs><linearGradient id="t69" x1="0" y1="0" x2="0" y2="1"><stop offset="0" stop-color="#b8bcc8"></stop><stop offset="0.5" stop-color="#d4d4e0"></stop><stop offset="0.8" stop-color="#9a98b8"></stop><stop offset="1" stop-color="#4a487a"></stop></linearGradient></defs><rect width="73" height="41" fill="url(#t69)"></rect><ellipse cx="30" cy="14" rx="16" ry="9" fill="#eceef4" opacity="0.7"></ellipse><path d="M40 38l8-14l10-8" stroke="#4a3a4a" stroke-width="1.200" fill="none"></path><circle cx="50" cy="22" r="3.500" fill="#f2f2f2"></circle><circle cx="50.500" cy="19" r="2.200" fill="#2a2a3a"></circle><circle cx="62" cy="14" r="2" fill="#e070a0"></circle><circle cx="58" cy="20" r="1.600" fill="#e070a0"></circle><rect x="0.500" y="0.500" width="72" height="40" fill="none" stroke="#1a1a1a"></rect></svg>
<svg class="a" style="left:1082.2px;top:925px" width="73" height="41" viewBox="0 0 73 41"><defs><linearGradient id="t70" x1="0" y1="0" x2="0" y2="1"><stop offset="0" stop-color="#2e2620"></stop><stop offset="0.4" stop-color="#5a4a3a"></stop><stop offset="0.7" stop-color="#8a6a3a"></stop><stop offset="1" stop-color="#7a5a2a"></stop></linearGradient></defs><rect width="73" height="41" fill="url(#t70)"></rect><rect x="26" y="0" width="22" height="14" fill="#e8e0d8"></rect><rect x="50" y="0" width="10" height="16" fill="#a08a6a"></rect><path d="M2 22c6-8 20-10 32-8l8-3l6 3l8 8l-6 8l-14 2l-30-2z" fill="#cfc8c2"></path><path d="M36 16l4-5l3 5l5 1l3-4l3 8l-6 8l-10-2z" fill="#e4ded8"></path><rect x="0.500" y="0.500" width="72" height="40" fill="none" stroke="#1a1a1a"></rect></svg>
<svg class="a" style="left:1162.4px;top:925px" width="73" height="41" viewBox="0 0 73 41"><rect width="73" height="41" fill="#4a2022"></rect><rect x="0" y="0" width="14" height="41" fill="#2a2628"></rect><rect x="60" y="0" width="13" height="30" fill="#6a8ab0" opacity="0.7"></rect><path d="M28 6c4-6 16-6 20 2l2 12l-8 6h-10l-6-8z" fill="#2a1614"></path><path d="M34 10l8-1l3 8l-4 6h-6z" fill="#e0b098"></path><path d="M22 26l12-3l12 4l8 8v6h-36z" fill="#d05a4a"></path><circle cx="30" cy="30" r="3" fill="#ffb060"></circle><rect x="0.500" y="0.500" width="72" height="40" fill="none" stroke="#1a1a1a"></rect></svg>
<svg class="a" style="left:1244.6px;top:924px" width="69" height="43" viewBox="0 0 69 43"><defs><linearGradient id="t72" x1="0" y1="0" x2="1" y2="1"><stop offset="0" stop-color="#a8a8a4"></stop><stop offset="1" stop-color="#8a8a88"></stop></linearGradient></defs><rect width="69" height="43" fill="url(#t72)"></rect><path d="M40 0l29 12v8l-32-14z" fill="#c8c8c4"></path><path d="M26 4c4-5 14-5 17 1l2 12l-5 4h-10l-5-4z" fill="#e8d49a"></path><path d="M30 8l8-1l2 8l-4 5l-5-1z" fill="#e8c0a8"></path><path d="M22 22l8-3h10l8 3l2 14l-8 7h-14l-8-7z" fill="#1c1c1e"></path><path d="M29 22l6 8l6-8z" fill="#e8c0a8"></path><path d="M22 38l6-4l4 9h-12zM42 34l8 4l2 5h-12z" fill="#e0b8a0"></path><rect x="0.500" y="0.500" width="68" height="42" fill="none" stroke="#1a1a1a"></rect></svg>
<svg class="a" style="left:1324.8px;top:924px" width="69" height="43" viewBox="0 0 69 43"><rect width="69" height="43" fill="#6a6a7a"></rect><g fill="#b8b4c8" opacity="0.8"><circle cx="8" cy="8" r="7"></circle><circle cx="22" cy="5" r="6"></circle><circle cx="56" cy="9" r="8"></circle><circle cx="64" cy="24" r="7"></circle><circle cx="6" cy="28" r="7"></circle><circle cx="14" cy="38" r="6"></circle><circle cx="44" cy="4" r="5"></circle><circle cx="58" cy="38" r="6"></circle></g><path d="M28 8c3-5 12-5 14 1l1 12l-5 3h-7l-4-4z" fill="#5a3a2a"></path><path d="M31 11l7-1l2 7l-4 4l-4-1z" fill="#e8c0a8"></path><path d="M24 24l8-2l8 1l6 4l-2 10l-8 6h-8l-6-8z" fill="#dfe2ee"></path><path d="M28 36l6-2l6 3l2 6h-14z" fill="#e8c0a8"></path><rect x="0.500" y="0.500" width="68" height="42" fill="none" stroke="#1a1a1a"></rect></svg>
<div class="a" style="left:1404px;top:925px;width:12px;height:41px;overflow:hidden;background:#7a8896;border:1px solid #333;border-right:none"></div>
<div class="a" style="left:18px;top:925px;width:15px;height:41px;background:linear-gradient(90deg,#0e1416,#2a3a3c);border:1px solid #151515;border-left:none"></div>
<div class="a" style="left:1059px;top:990px;width:323px;height:8px;background:#8e8e8e;border-radius:1px"></div>
<!-- context menu -->
<div class="menu" style="left:572px;top:176px;width:410px;height:805px"></div>
<div class="a" style="left:578px;top:376px;width:399px;height:21px;background:#91c9f7;border-radius:3px"></div>
<div class="m" style="top: 184px; letter-spacing: 0.085px;">Открыть сравнительный обзор</div>
<div class="m" style="top: 208px; letter-spacing: -0.026px;">Выбрать как образец фотографии</div>
<div class="m" style="top: 239px; letter-spacing: 0.325px;">Прикрепить ко второму окну</div>
<div class="m" style="top: 270.5px; letter-spacing: 0.024px;">Показать в обозревателе</div>
<div class="m" style="top: 294px; letter-spacing: 0.041px;">Перейти к папке в библиотеке</div>
<div class="m" style="top: 318px; letter-spacing: 0.081px;">Перейти к коллекции</div>
<svg class="a" style="left:960px;top:319.0px" width="8" height="10" viewBox="0 0 8 10"><path d="M2.200 0.800l3.800 3.900l-3.800 3.900" fill="none" stroke="#222" stroke-width="1.050"></path></svg>
<div class="m d" style="top: 349px; letter-spacing: -0.072px;">Найти похожие лица...</div>
<div class="m" style="top: 380.5px; letter-spacing: 0.016px;">Изменить в</div>
<svg class="a" style="left:960px;top:381.5px" width="8" height="10" viewBox="0 0 8 10"><path d="M2.200 0.800l3.800 3.900l-3.800 3.900" fill="none" stroke="#222" stroke-width="1.050"></path></svg>
<div class="m" style="top: 404px; letter-spacing: -0.086px;">Объединение фотографий</div>
<svg class="a" style="left:960px;top:405.0px" width="8" height="10" viewBox="0 0 8 10"><path d="M2.200 0.800l3.800 3.900l-3.800 3.900" fill="none" stroke="#222" stroke-width="1.050"></path></svg>
<div class="m" style="top: 428px; letter-spacing: -0.287px;">Улучшить...</div>
<div class="m" style="top: 459px; letter-spacing: 0.076px;">Создание с помощью Firefly</div>
<svg class="a" style="left:960px;top:460.0px" width="8" height="10" viewBox="0 0 8 10"><path d="M2.200 0.800l3.800 3.900l-3.800 3.900" fill="none" stroke="#222" stroke-width="1.050"></path></svg>
<div class="m" style="top: 490.5px; letter-spacing: -0.164px;">Отметить</div>
<svg class="a" style="left:960px;top:491.5px" width="8" height="10" viewBox="0 0 8 10"><path d="M2.200 0.800l3.800 3.900l-3.800 3.900" fill="none" stroke="#222" stroke-width="1.050"></path></svg>
<div class="m" style="top: 514px; letter-spacing: -0.032px;">Установить рейтинг</div>
<svg class="a" style="left:960px;top:515.0px" width="8" height="10" viewBox="0 0 8 10"><path d="M2.200 0.800l3.800 3.900l-3.800 3.900" fill="none" stroke="#222" stroke-width="1.050"></path></svg>
<div class="m" style="top: 538px; letter-spacing: 0.129px;">Установка цветовой метки</div>
<svg class="a" style="left:960px;top:539.0px" width="8" height="10" viewBox="0 0 8 10"><path d="M2.200 0.800l3.800 3.900l-3.800 3.900" fill="none" stroke="#222" stroke-width="1.050"></path></svg>
<div class="m" style="top: 562px; letter-spacing: -0.121px;">Сбросить статус экспорта</div>
<div class="m d" style="top: 586px; letter-spacing: 0.085px;">Добавить ключевое слово для комбинации клавиш</div>
<div class="m" style="top: 617px; letter-spacing: 0.134px;">Добавить в быструю коллекцию</div>
<div class="m" style="top: 648px; letter-spacing: 0.208px;">Упорядочение в подборках</div>
<svg class="a" style="left:960px;top:649.0px" width="8" height="10" viewBox="0 0 8 10"><path d="M2.200 0.800l3.800 3.900l-3.800 3.900" fill="none" stroke="#222" stroke-width="1.050"></path></svg>
<div class="m" style="top: 672px; letter-spacing: 0.418px;">Люди</div>
<svg class="a" style="left:960px;top:673.0px" width="8" height="10" viewBox="0 0 8 10"><path d="M2.200 0.800l3.800 3.900l-3.800 3.900" fill="none" stroke="#222" stroke-width="1.050"></path></svg>
<div class="m" style="top: 696px; letter-spacing: 0.117px;">Создать виртуальную копию</div>
<div class="m" style="top: 727px; letter-spacing: 0.168px;">Настройки обработки</div>
<svg class="a" style="left:960px;top:728.0px" width="8" height="10" viewBox="0 0 8 10"><path d="M2.200 0.800l3.800 3.900l-3.800 3.900" fill="none" stroke="#222" stroke-width="1.050"></path></svg>
<div class="m" style="top: 751px; letter-spacing: -0.221px;">Стили метаданных</div>
<svg class="a" style="left:960px;top:752.0px" width="8" height="10" viewBox="0 0 8 10"><path d="M2.200 0.800l3.800 3.900l-3.800 3.900" fill="none" stroke="#222" stroke-width="1.050"></path></svg>
<div class="m" style="top: 782px; letter-spacing: 0.164px;">Преобразование</div>
<svg class="a" style="left:960px;top:783.0px" width="8" height="10" viewBox="0 0 8 10"><path d="M2.200 0.800l3.800 3.900l-3.800 3.900" fill="none" stroke="#222" stroke-width="1.050"></path></svg>
<div class="m" style="top: 813px; letter-spacing: -0.117px;">Метаданные</div>
<svg class="a" style="left:960px;top:814.0px" width="8" height="10" viewBox="0 0 8 10"><path d="M2.200 0.800l3.800 3.900l-3.800 3.900" fill="none" stroke="#222" stroke-width="1.050"></path></svg>
<div class="m" style="top: 837px; letter-spacing: 0.129px;">Экспорт</div>
<svg class="a" style="left:960px;top:838.0px" width="8" height="10" viewBox="0 0 8 10"><path d="M2.200 0.800l3.800 3.900l-3.800 3.900" fill="none" stroke="#222" stroke-width="1.050"></path></svg>
<div class="m" style="top: 868px; letter-spacing: 0.017px;">Отправить фотографию по электронной почте...</div>
<div class="m" style="top: 899.5px; letter-spacing: -0.298px;">Удалить фото...</div>
<div class="m" style="top: 931px; letter-spacing: 0.061px;">Параметры просмотра...</div>
<div class="m" style="top: 962px; letter-spacing: -0.047px;">Параметры фона</div>
<svg class="a" style="left:960px;top:963.0px" width="8" height="10" viewBox="0 0 8 10"><path d="M2.200 0.800l3.800 3.900l-3.800 3.900" fill="none" stroke="#222" stroke-width="1.050"></path></svg>
<div class="ms" style="top:229px"></div>
<div class="ms" style="top:260px"></div>
<div class="ms" style="top:340px"></div>
<div class="ms" style="top:370px"></div>
<div class="ms" style="top:450px"></div>
<div class="ms" style="top:480px"></div>
<div class="ms" style="top:608px"></div>
<div class="ms" style="top:638px"></div>
<div class="ms" style="top:718px"></div>
<div class="ms" style="top:772px"></div>
<div class="ms" style="top:804px"></div>
<div class="ms" style="top:858px"></div>
<div class="ms" style="top:890px"></div>
<div class="ms" style="top:921px"></div>
<div class="ms" style="top:952px"></div>
<div class="m" style="left: 927px; top: 931px; letter-spacing: -0.112px;">Ctrl+J</div>
<div class="menu" style="left:979px;top:372px;width:363px;height:186px"></div>
<div class="a" style="left:984px;top:376px;width:353px;height:21px;background:#91c9f7;border-radius:3px"></div>
<div class="s" style="top: 380.5px; letter-spacing: 0.08px;">Редактировать в Adobe Photoshop 2026...</div>
<div class="s" style="top: 412px; letter-spacing: 0.079px;">Редактировать в другом приложении...</div>
<div class="s" style="top: 443.5px; letter-spacing: 0.111px;">Открыть как смарт-объект в Photoshop...</div>
<div class="s d" style="top: 467.2px; letter-spacing: 0.11px;">Открыть как слои смарт-объектов в Photoshop...</div>
<div class="s d" style="top: 490.9px; letter-spacing: 0.078px;">Объединить в панораму в Photoshop...</div>
<div class="s d" style="top: 514.5px; letter-spacing: 0px;">Объединить в HDR Pro в Photoshop...</div>
<div class="s d" style="top: 538.1px; letter-spacing: 0.059px;">Открыть как слои в Photoshop...</div>
<div class="ss" style="top:402px"></div>
<div class="ss" style="top:433px"></div>
</div>
<div id="frame"></div>

</body></html>
